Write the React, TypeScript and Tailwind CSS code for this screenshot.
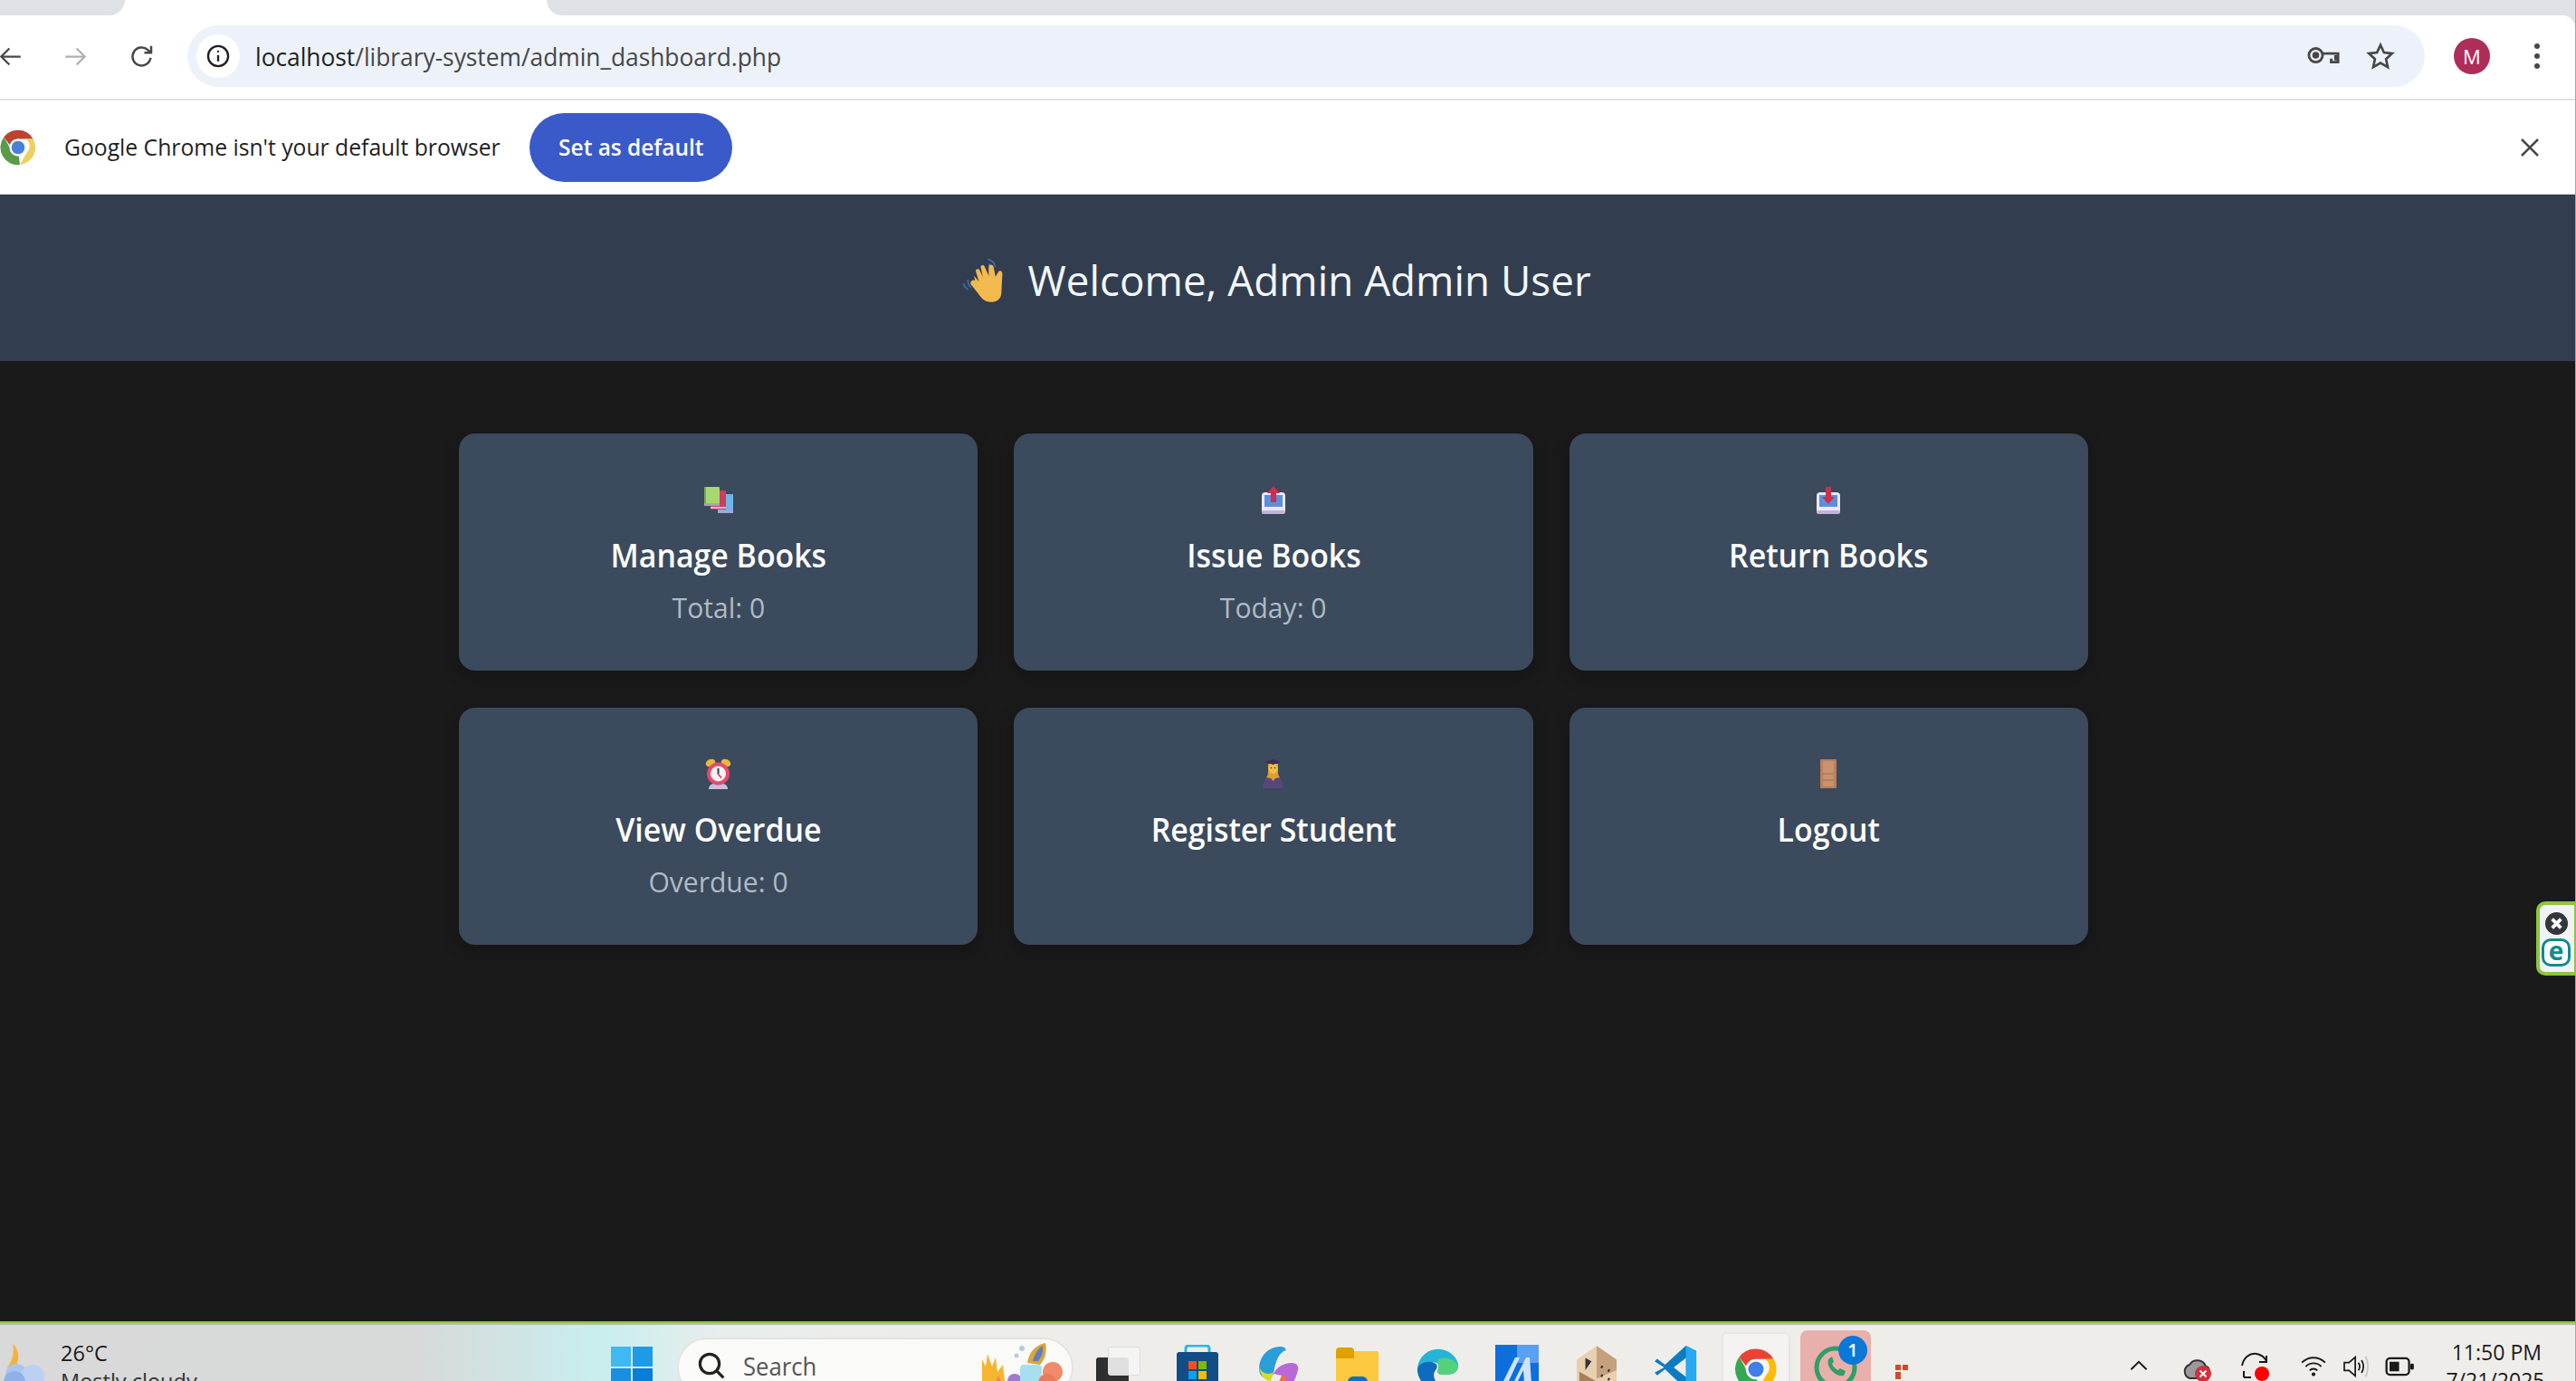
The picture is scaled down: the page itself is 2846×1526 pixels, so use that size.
import React from "react";

const font = { fontFamily: '"Open Sans","Noto Sans",sans-serif' };

function Chrome({ size, muted }: { size: number; muted?: boolean }) {
  return (
    <svg width={size} height={size} viewBox="0 0 48 48" className="shrink-0">
      <path d="M24 4a20 20 0 0 1 17.3 10H24a10 10 0 0 0-9.6 7L7.6 12A20 20 0 0 1 24 4z" fill={muted ? "#bc432f" : "#ea4335"} />
      <path d="M41.3 14A20 20 0 0 1 26 43.9L34.6 29A10 10 0 0 0 33 14z" fill={muted ? "#ecd060" : "#fbbc04"} />
      <path d="M26 43.9A20 20 0 0 1 7.6 12l8.6 15a10 10 0 0 0 8.8 7z" fill={muted ? "#5a9a4a" : "#34a853"} />
      <circle cx="24" cy="24" r="10" fill="#fff" />
      <circle cx="24" cy="24" r="7.6" fill={muted ? "#4a7fdc" : "#3f7fe8"} />
    </svg>
  );
}

function Card({ icon, title, sub }: { icon: React.ReactNode; title: string; sub?: string }) {
  return (
    <div className="h-[262px] rounded-[18px] bg-[#3b4a5d] shadow-[0_6px_18px_rgba(0,0,0,0.25)] flex flex-col items-center pt-[57px]">
      <div className="h-[32px] flex items-center justify-center">{icon}</div>
      <div className="mt-[22px] text-[36px] leading-[48px] font-semibold text-white scale-x-[0.94] whitespace-nowrap">{title}</div>
      {sub && <div className="mt-[12px] text-[31px] leading-[42px] text-[#b0bac3] scale-x-[0.97] whitespace-nowrap">{sub}</div>}
    </div>
  );
}

const Books = (
  <svg width="32" height="29" viewBox="0 0 32 29">
    <rect x="15" y="8" width="17" height="21" fill="#6fb5ea" />
    <rect x="15" y="26" width="17" height="3" fill="#a9a4d8" />
    <rect x="7" y="4" width="17" height="21" fill="#c93e5e" />
    <rect x="7" y="22" width="17" height="2" fill="#e9b7cb" />
    <rect x="0" y="0" width="17" height="21" rx="1" fill="#a6d86f" />
    <rect x="0" y="0" width="2" height="21" fill="#76a957" />
    <rect x="0" y="18" width="17" height="3" fill="#a3a9ae" />
  </svg>
);

function TrayIcon({ up }: { up: boolean }) {
  return (
    <svg width="26" height="31" viewBox="0 0 26 31">
      <rect x="0" y="7" width="26" height="24" rx="4" fill="#ece9f3" />
      <rect x="3" y="10" width="20" height="13" fill="#5b8fdc" />
      <path d="M3 23h5l2 3h6l2-3h5v4H3z" fill="#ece9f3" />
      <rect x="0" y="27" width="26" height="4" rx="2" fill="#c3b2dc" />
      {up ? (
        <path d="M13 0l7 8h-4v10h-6V8H6z" fill="#c9304f" />
      ) : (
        <path d="M10 1h6v11h4l-7 8-7-8h4z" fill="#c9304f" />
      )}
    </svg>
  );
}

const Alarm = (
  <svg width="29" height="34" viewBox="0 0 29 34">
    <ellipse cx="6" cy="5" rx="5.5" ry="4" fill="#e9b73f" transform="rotate(-25 6 5)" />
    <ellipse cx="23" cy="5" rx="5.5" ry="4" fill="#e9b73f" transform="rotate(25 23 5)" />
    <path d="M4 34c0-4 3-6 6-6h9c3 0 6 2 6 6z" fill="#c9bde0" />
    <circle cx="14.5" cy="17" r="12.5" fill="#e8496a" />
    <circle cx="14.5" cy="17" r="8.5" fill="#f5f2f5" />
    <path d="M14.5 11v6.5" stroke="#3a3a48" strokeWidth="2" fill="none" />
    <path d="M14.5 17.5l3.5 4" stroke="#d93a55" strokeWidth="1.6" fill="none" />
  </svg>
);

const Student = (
  <svg width="27" height="32" viewBox="0 0 27 32">
    <path d="M2 32c0-9 4-14 11.500-14S25 23 25 32z" fill="#57477a" />
    <path d="M8 5h11v10c0 2 1 4 2 5l-5 1-2.500 3-2.500-3-5-1c1-1 2-3 2-5z" fill="#dea032" />
    <ellipse cx="13.5" cy="10" rx="5" ry="6" fill="#f2bd42" />
    <path d="M5 3l8.500-3L22 3l-8.500 3z" fill="#3b2f58" />
    <circle cx="11.500" cy="9.500" r="0.800" fill="#5c3a10" />
    <circle cx="15.500" cy="9.500" r="0.800" fill="#5c3a10" />
  </svg>
);

const Door = (
  <svg width="18" height="32" viewBox="0 0 18 32">
    <rect x="0" y="0" width="18" height="32" rx="1" fill="#b97f5c" />
    <rect x="3" y="2" width="12" height="13" fill="#c99270" />
    <rect x="3" y="17" width="12" height="5" fill="#c99270" />
    <rect x="3" y="24" width="12" height="6" fill="#c99270" />
  </svg>
);

export default function App() {
  return (
    <div style={font} className="w-[2846px] h-[1526px] overflow-hidden flex flex-col bg-[#1a1a1a] relative border-r-[1px] border-[#8cc63f]">
      {/* Tab strip */}
      <div className="h-[17px] bg-white flex shrink-0">
        <div className="w-[138px] h-full bg-[#dee1e6] rounded-br-[20px]" />
        <div className="w-[466px] h-full" />
        <div className="flex-1 h-full bg-[#dee1e6] rounded-bl-[20px]" />
      </div>
      {/* Toolbar */}
      <div className="bg-[#dee1e6] shrink-0">
        <div className="h-[94px] bg-white rounded-tr-[14px] flex items-center border-b-[2px] border-[#e2e2e2] pb-[2px]">
          <svg className="-ml-[2px] shrink-0" width="27" height="27" viewBox="0 0 24 24" fill="none" stroke="#474747" strokeWidth="2"><path d="M22 12H3M11 4l-8 8 8 8" /></svg>
          <svg className="ml-[45px] shrink-0" width="27" height="27" viewBox="0 0 24 24" fill="none" stroke="#b0b0b0" strokeWidth="2"><path d="M2 12h19M13 4l8 8-8 8" /></svg>
          <svg className="ml-[45px] shrink-0" width="30" height="30" viewBox="0 0 24 24" fill="none" stroke="#474747" strokeWidth="2"><path d="M19.500 13.500A8 8 0 1 1 17 6.500L20 9M20 3v6h-6" /></svg>
          <div className="ml-[35px] flex-1 h-[68px] bg-[#edf2fa] rounded-full flex items-center pl-[10px] pr-[32px]">
            <div className="h-[48px] w-[48px] rounded-full bg-white flex items-center justify-center shrink-0">
              <svg width="28" height="28" viewBox="0 0 24 24" fill="none" stroke="#1f1f1f" strokeWidth="2"><circle cx="12" cy="12" r="9.500" /><path d="M12 11v6" /><circle cx="12" cy="7.600" r="1" fill="#1f1f1f" stroke="none" /></svg>
            </div>
            <div className="ml-[17px] text-[28px] text-[#1f1f1f] scale-x-[0.94] origin-left whitespace-nowrap">localhost<span className="text-[#474747]">/library-system/admin_dashboard.php</span></div>
            <div className="flex-1" />
            <svg width="36" height="22" viewBox="0 0 38 22" fill="none" stroke="#474747" strokeWidth="3"><circle cx="10" cy="10" r="8" /><circle cx="10" cy="10" r="2.500" fill="#474747" /><path d="M18 8h18v10h-8v-4M33 10v6" /></svg>
            <svg className="ml-[28px]" width="34" height="32" viewBox="0 0 24 24" fill="none" stroke="#474747" strokeWidth="2"><path d="M12 2.800l2.900 6.200 6.700.8-5 4.600 1.400 6.700-6-3.400-6 3.400 1.400-6.700-5-4.600 6.700-.8z" /></svg>
          </div>
          <div className="w-[40px] h-[40px] ml-[32px] rounded-full bg-[#ae2d5b] text-white text-[22px] flex items-center justify-center shrink-0">M</div>
          <div className="w-[8px] ml-[48px] mr-[38px] flex flex-col gap-[5px] shrink-0 items-center">
            <div className="w-[6px] h-[6px] rounded-full bg-[#474747]" />
            <div className="w-[6px] h-[6px] rounded-full bg-[#474747]" />
            <div className="w-[6px] h-[6px] rounded-full bg-[#474747]" />
          </div>
        </div>
      </div>
      {/* Infobar */}
      <div className="h-[104px] bg-white flex items-center shrink-0 border-b-[1px] border-[#e2e2e2]">
        <div className="-ml-[3px]"><Chrome size={46} muted /></div>
        <div className="ml-[28px] text-[26px] text-[#1f1f1f] scale-x-[0.95] origin-left whitespace-nowrap w-[514px]">Google Chrome isn't your default browser</div>
        <div className="w-[224px] h-[76px] rounded-full bg-[#3a5ac9] text-white text-[26px] font-semibold flex items-center justify-center"><span className="scale-x-[0.94] whitespace-nowrap">Set as default</span></div>
        <div className="flex-1" />
        <svg className="mr-[39px]" width="22" height="22" viewBox="0 0 22 22" stroke="#474747" strokeWidth="2.600"><path d="M2 2l18 18M20 2L2 20" /></svg>
      </div>
      {/* Header */}
      <div className="h-[184px] bg-[#323e4f] flex items-center justify-center shrink-0 pt-[4px]">
        <div className="flex items-center -ml-[24px]">
          <svg width="54" height="54" viewBox="0 0 50 50" className="mr-[19px]">
            <path d="M3 29c1 3 3 5 5 6M8 25c-1 3 1 6 3 8M28 4c4 1 7 4 8 8M29 9c2 1 4 3 5 5" stroke="#3d6ba8" strokeWidth="1.600" fill="none" />
            <path d="M14 21l5 6-3-10c-1-3 3-4 4-1l3 6-2-9c-1-3 3-4 4-1l4 9 0-9c0-3 4-3 5 0l2 10 3-5c1-2 4-1 4 2l-1 19c0 7-5 10-11 10-7 0-10-5-13-9l-7-9c-2-3 2-6 4-4z" fill="#f2b94e" />
          </svg>
          <div className="text-[46px] leading-[60px] text-[#f3f6fa] whitespace-nowrap scale-x-[0.995]">Welcome, Admin Admin User</div>
        </div>
      </div>
      {/* Content */}
      <div className="flex-1 min-h-0 pt-[80px] flex justify-center">
        <div className="w-[1800px] -ml-[31px] grid grid-cols-3 gap-x-[40px] gap-y-[41px] content-start">
          <Card icon={Books} title="Manage Books" sub="Total: 0" />
          <Card icon={<TrayIcon up />} title="Issue Books" sub="Today: 0" />
          <Card icon={<TrayIcon up={false} />} title="Return Books" />
          <Card icon={Alarm} title="View Overdue" sub="Overdue: 0" />
          <Card icon={Student} title="Register Student" />
          <Card icon={Door} title="Logout" />
        </div>
      </div>
      {/* Floating widget */}
      <div className="absolute right-0 top-[996px] w-[43px] h-[82px] bg-[#f2f2f2] border-[4px] border-r-[1px] border-[#8cc63f] rounded-l-[10px] flex flex-col items-center justify-center gap-[3px] pr-[2px]">
        <svg width="27" height="27" viewBox="0 0 28 28"><circle cx="14" cy="14" r="13" fill="#32373e" /><path d="M9 9l10 10M19 9L9 19" stroke="#fff" strokeWidth="4" /></svg>
        <div className="w-[32px] h-[31px] rounded-[10px] border-[3px] border-[#0f8a93] text-[#0f8a93] font-bold text-[28px] leading-none flex items-center justify-center pb-[4px] bg-white">e</div>
      </div>
      {/* Taskbar */}
      <div className="shrink-0">
        <div className="h-[2px] bg-[#8cc63f]" />
        <div className="h-[2px] bg-[#b8b8b8]" />
        <div className="h-[62px] bg-[linear-gradient(90deg,#d9d9d9_0%,#d8d9d9_16%,#c9eeee_23.400%,#e8eeec_28%,#efedea_40%,#efedea_100%)] flex items-start overflow-hidden">
          {/* Weather */}
          <div className="w-[675px] shrink-0 flex items-start">
            <svg className="ml-[2px] mt-[19px] shrink-0" width="56" height="50" viewBox="0 0 56 50">
              <path d="M6 28C12 20 14 10 12 2c8 6 8 20 2 26z" fill="#f2b33d" />
              <circle cx="16" cy="36" r="12" fill="#a9c4f0" />
              <circle cx="34" cy="38" r="13" fill="#bcd0f3" />
              <circle cx="14" cy="44" r="12" fill="#8fb0e8" />
            </svg>
            <div className="ml-[9px] mt-[15px] text-[24px] leading-[31px] text-[#1a1a1a] scale-x-[0.98] origin-left whitespace-nowrap">26°C<br /><span className="text-[#333]">Mostly cloudy</span></div>
          </div>
          {/* Start */}
          <div className="mt-[24px] grid grid-cols-2 gap-[2px] w-[46px] shrink-0">
            <div className="w-[22px] h-[22px] bg-[#3fb8f3]" /><div className="w-[22px] h-[22px] bg-[#1f9be6]" />
            <div className="w-[22px] h-[22px] bg-[#1a8fe0]" /><div className="w-[22px] h-[22px] bg-[#0a7dd6]" />
          </div>
          {/* Search */}
          <div className="ml-[27px] mt-[14px] w-[438px] h-[66px] shrink-0 rounded-full bg-[#fafaf8] border-[2px] border-[#e4e4e2] flex items-start pl-[20px] pt-[12px] relative">
            <svg width="32" height="34" viewBox="0 0 24 24" fill="none" stroke="#222" strokeWidth="2.400"><circle cx="10.500" cy="10.500" r="8" /><path d="M16 16l6 6" /></svg>
            <span className="ml-[19px] text-[27px] leading-[36px] text-[#555] scale-x-[0.95] origin-left">Search</span>
            <svg className="absolute right-[9px] top-[4px]" width="92" height="50" viewBox="0 0 92 50">
              <path d="M2 50V18l4 8 2-14 5 14 4-10 2 16 6-8 3 26z" fill="#f4b62e" />
              <path d="M14 50l6-14 6 14z" fill="#ef7f62" />
              <circle cx="38" cy="42" r="8" fill="#9f7bd0" />
              <rect x="44" y="24" width="24" height="26" rx="4" fill="#a8dff0" />
              <circle cx="80" cy="32" r="11" fill="#ef8a6b" />
              <circle cx="74" cy="44" r="10" fill="#e97a5c" />
              <path d="M52 22C54 10 60 3 72 0c2 8 0 18-6 24z" fill="#d9a53d" />
              <path d="M58 20c2-8 6-14 11-17 1 6-1 12-5 17z" fill="#5f7fb4" />
              <circle cx="40" cy="14" r="2.500" fill="#b9c9dd" />
              <circle cx="46" cy="6" r="3" fill="#b9c9dd" />
            </svg>
          </div>
          {/* Pinned apps */}
          <div className="ml-[25px] mt-[24px] relative w-[50px] h-[50px] shrink-0">
            <div className="absolute left-0 top-[12px] w-[36px] h-[40px] bg-[#2f2f2f] rounded-[3px]" />
            <div className="absolute left-[13px] top-0 w-[36px] h-[32px] bg-[#f4f4f4]/90 rounded-[3px] border border-[#ddd]" />
          </div>
          <svg className="ml-[39px] mt-[22px] shrink-0" width="46" height="50" viewBox="0 0 46 50"><path d="M10 12V4a3 3 0 0 1 3-3h20a3 3 0 0 1 3 3v8" stroke="#28b8ee" strokeWidth="3" fill="none" /><rect x="0" y="8" width="46" height="42" rx="3" fill="#124d85" /><rect x="13" y="18" width="9" height="9" fill="#f25022" /><rect x="24" y="18" width="9" height="9" fill="#7fba00" /><rect x="13" y="29" width="9" height="9" fill="#00a4ef" /><rect x="24" y="29" width="9" height="9" fill="#ffb900" /></svg>
          <svg className="ml-[42px] mt-[24px] shrink-0" width="47" height="50" viewBox="0 0 47 50">
            <path d="M4 30C0 14 12 0 26 0c4 0 6 1 7 4-8 2-12 12-14 26-2 6-12 6-15 0z" fill="#2a9ed8" />
            <path d="M3 22c2 8 12 10 16 6l-3 10C10 38 4 32 3 22z" fill="#d8d92a" />
            <path d="M19 30c4-8 12-12 20-12 6 0 8 4 7 8-3 12-9 24-22 24-4 0-6-2-7-4 6-2 9-8 11-14z" fill="#b968d8" />
            <path d="M17 46c6-2 9-8 11-14l6 2c-2 8-6 14-12 16-3 0-4-2-5-4z" fill="#f0704b" />
          </svg>
          <div className="ml-[41px] mt-[25px] relative w-[47px] h-[50px] shrink-0">
            <div className="absolute top-[4px] w-full h-[44px] bg-[#fcc83f] rounded-[2px]" />
            <div className="absolute top-0 w-[20px] h-[12px] bg-[#dfa000] rounded-t-[4px]" />
            <div className="absolute left-[13px] top-[32px] w-[22px] h-[14px] rounded-t-[6px] bg-[#0c6fc1]" />
          </div>
          <svg className="ml-[41px] mt-[22px] shrink-0" width="48" height="50" viewBox="0 0 50 50"><path d="M2 28a24 24 0 0 1 47-7c1 8-5 12-11 12H30c-4 0-6-3-4-6 3-3 1-8-6-8-9 0-18 3-18 9z" fill="#26b4d6" /><path d="M26 16c10-4 20 0 23 8-1 6-6 9-11 9h-8c-5 0-6-4-4-6z" fill="#53d27a" /><path d="M2 28c0-8 12-12 20-8 4 2 3 6 1 8-5 6-1 18 14 20a24 24 0 0 1-35-20z" fill="#0f6cbd" /></svg>
          <div className="ml-[40px] mt-[22px] relative w-[48px] h-[50px] bg-[#0c6fdc] overflow-hidden shrink-0">
            <div className="absolute top-0 right-0 w-[24px] h-[20px] bg-[#5aa0f2]" />
            <svg className="absolute inset-0" width="48" height="50" viewBox="0 0 48 50"><path d="M8 42L22 14h5L14 42zM20 42L34 14h4l2 28h-8l-1-14-7 14z" fill="#cfe3fb" /></svg>
          </div>
          <svg className="ml-[42px] mt-[22px] shrink-0" width="44" height="52" viewBox="0 0 46 52"><path d="M23 0L0 16v26l23 10 23-10V16z" fill="#e8cfae" /><path d="M23 0l23 16v12L23 38z" fill="#c4a07c" /><path d="M3 30l18 10v10L3 42z" fill="#a67f5c" /><path d="M10 14l7 4-7 10z" fill="#333" /><path d="M28 24l2 1M36 28l2 1M28 34l2 1M36 38l2 1" stroke="#333" strokeWidth="3" /></svg>
          <svg className="ml-[42px] mt-[22px] shrink-0" width="48" height="50" viewBox="0 0 50 50"><path d="M36 0l12 6v38l-12 6L12 27 3 34 0 31l11-6L0 18l3-3 9 7z" fill="#0e7bc0" /><path d="M36 0l12 6v38l-12 6z" fill="#25a9f0" /><path d="M36 14v22L22 25z" fill="#efedea" /></svg>
          <div className="ml-[26px] mt-[8px] w-[76px] h-[70px] shrink-0 rounded-[6px] bg-[#f4f3f1] border-[2px] border-[#e8e6e3] flex justify-center pt-[12px]"><Chrome size={54} /></div>
          <div className="ml-[11px] mt-[6px] w-[78px] h-[72px] shrink-0 rounded-[8px] bg-[#e8b0aa] flex justify-center pt-[16px] relative">
            <svg width="50" height="50" viewBox="0 0 50 50" fill="none"><circle cx="25" cy="25" r="21" stroke="#2e9e6a" strokeWidth="5" /><path d="M17 16c-3 8 8 20 17 18l2-5-6-3-2 2c-3-1-6-4-7-7l2-2-2-6z" fill="#2e9e6a" /></svg>
            <div className="absolute left-[42px] top-[6px] w-[32px] h-[32px] rounded-full bg-[#0a78d7] text-white text-[20px] font-semibold flex items-center justify-center">1</div>
          </div>
          <svg className="ml-[27px] mt-[44px] shrink-0" width="28" height="20" viewBox="0 0 28 20"><rect x="0" y="8" width="6" height="8" fill="#d24a2a" /><rect x="0" y="0" width="6" height="6" fill="#d24a2a" /><rect x="8" y="0" width="6" height="6" fill="#d24a2a" /></svg>
          <div className="flex-1" />
          {/* Tray */}
          <svg className="mt-[39px] shrink-0" width="22" height="12" viewBox="0 0 24 14" fill="none" stroke="#1a1a1a" strokeWidth="2.200"><path d="M2 12L12 2l10 10" /></svg>
          <svg className="ml-[37px] mt-[35px] shrink-0" width="34" height="32" viewBox="0 0 34 32"><path d="M8 24a8 8 0 0 1 0-15 10 10 0 0 1 18 2c3 0 5 4 3 8l-5 5z" fill="#9a9a9a" stroke="#333" strokeWidth="2" /><circle cx="23" cy="19" r="9" fill="#d32f3c" /><path d="M19.500 15.500l7 7M26.500 15.500l-7 7" stroke="#fff" strokeWidth="2" /></svg>
          <svg className="ml-[30px] mt-[30px] shrink-0" width="34" height="38" viewBox="0 0 34 38" fill="none" stroke="#1a1a1a" strokeWidth="2"><path d="M2 15C4 6 10 1 18 2c6 1 9 4 11 8M29 4v7h-8M4 28h8M4 21v7" /><circle cx="24" cy="24" r="8" fill="#ff0000" stroke="none" /></svg>
          <svg className="ml-[31px] mt-[34px] shrink-0" width="32" height="24" viewBox="0 0 34 28" fill="none" stroke="#1a1a1a" strokeWidth="2.200"><path d="M2 9a21 21 0 0 1 30 0M7 14a14 14 0 0 1 20 0M12 19a7 7 0 0 1 10 0" /><circle cx="17" cy="24" r="2.400" fill="#1a1a1a" stroke="none" /></svg>
          <svg className="ml-[15px] mt-[33px] shrink-0" width="32" height="26" viewBox="0 0 34 30" fill="none" stroke="#1a1a1a" strokeWidth="2"><path d="M2 10h6l8-7v24l-8-7H2zM20 10c2 3 2 7 0 10M24 7c3 5 3 11 0 16" /><path d="M29 2c4 7 4 19 0 26" stroke="#c8c8c8" /></svg>
          <svg className="ml-[16px] mt-[35px] shrink-0" width="33" height="23" viewBox="0 0 34 24" fill="none"><rect x="1.500" y="2" width="26" height="19" rx="4" stroke="#1a1a1a" strokeWidth="2.400" /><rect x="5" y="6" width="11" height="11" fill="#1a1a1a" /><rect x="29" y="8" width="4" height="7" rx="1.500" fill="#1a1a1a" /></svg>
          <div className="ml-[30px] mr-[37px] mt-[14px] w-[110px] shrink-0 text-[24px] leading-[31px] text-right text-[#1a1a1a] scale-x-[0.96] origin-right whitespace-nowrap">11:50 PM<br />7/21/2025</div>
        </div>
      </div>
    </div>
  );
}
